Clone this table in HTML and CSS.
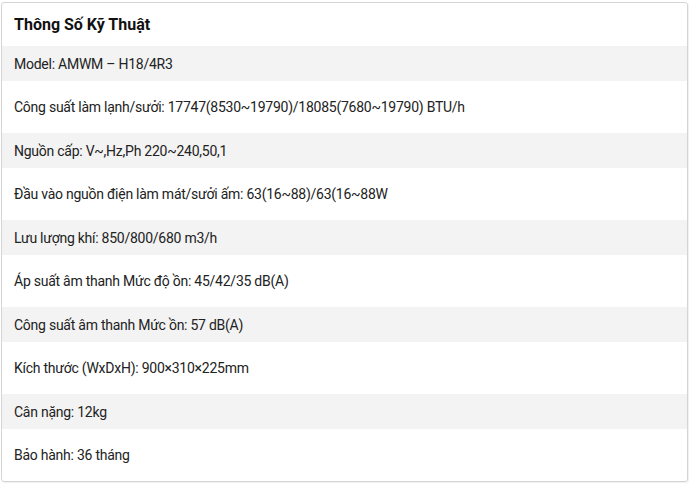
FILE: index.html
```html
<!DOCTYPE html>
<html lang="vi">
<head>
<meta charset="utf-8">
<link rel="stylesheet" href="styles.css">
</head>
<body>
<div class="spec">
  <div class="spec-title">Thông Số Kỹ Thuật</div>
  <div class="row alt">Model: AMWM – H18/4R3</div>
  <div class="row">Công suất làm lạnh/sưởi: 17747(8530~19790)/18085(7680~19790) BTU/h</div>
  <div class="row alt">Nguồn cấp: V~,Hz,Ph 220~240,50,1</div>
  <div class="row">Đầu vào nguồn điện làm mát/sưởi ấm: 63(16~88)/63(16~88W</div>
  <div class="row alt">Lưu lượng khí: 850/800/680 m3/h</div>
  <div class="row">Áp suất âm thanh Mức độ ồn: 45/42/35 dB(A)</div>
  <div class="row alt">Công suất âm thanh Mức ồn: 57 dB(A)</div>
  <div class="row">Kích thước (WxDxH): 900×310×225mm</div>
  <div class="row alt">Cân nặng: 12kg</div>
  <div class="row">Bảo hành: 36 tháng</div>
</div>
</body>
</html>
```

FILE: styles.css
```css
html, body {
  margin: 0;
  padding: 0;
  background: #ffffff;
}
body {
  padding: 2px 3px 3px 1px;
  font-family: Roboto, "Noto Sans", sans-serif;
  color: #222222;
}
.spec {
  border: 1px solid #d4d4d4;
  border-radius: 3px;
  overflow: hidden;
  box-shadow: 1px 1px 1px rgba(0,0,0,0.06);
}
.spec-title {
  height: 43px;
  display: flex;
  align-items: center;
  padding: 0 12px;
  font-size: 16px;
  font-weight: 700;
  color: #111111;
}
.row {
  height: 52px;
  display: flex;
  align-items: center;
  padding: 0 12px;
  font-size: 14px;
  letter-spacing: -0.25px;
}
.row.alt {
  height: 35px;
  background: #f3f3f3;
}
```
